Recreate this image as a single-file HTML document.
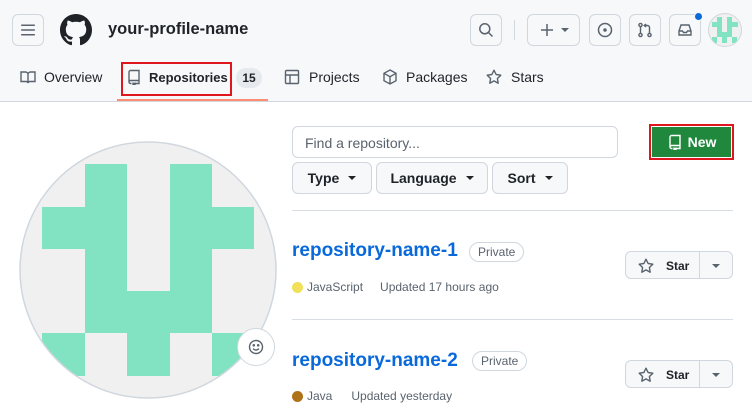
<!DOCTYPE html>
<html><head><meta charset="utf-8"><style>
*{box-sizing:border-box;margin:0;padding:0}
body{width:752px;height:420px;overflow:hidden;background:#fff;font-family:"Liberation Sans",sans-serif;color:#1f2328;position:relative}
.a{position:absolute}
.hdr{left:0;top:0;width:752px;height:102px;background:#f6f8fa;border-bottom:1px solid #d0d7de}
.ib{position:absolute;border:1px solid #d0d7de;border-radius:6px;background:#f6f8fa;display:flex;align-items:center;justify-content:center}
svg{display:block}
.tab{position:absolute;top:69px;font-size:14px;color:#1f2328;display:flex;align-items:center}
.btn{position:absolute;border:1px solid #d0d7de;border-radius:6px;background:#f6f8fa;font-size:14px;font-weight:bold;display:flex;align-items:center;justify-content:center;color:#1f2328}
.car{display:inline-block;width:0;height:0;border-left:4px solid transparent;border-right:4px solid transparent;border-top:4px solid #1f2328;margin-left:9px}
.title{position:absolute;left:292px;font-size:19px;font-weight:bold;color:#0969da}
.badge{position:absolute;border:1px solid #d0d7de;border-radius:10px;font-size:12px;color:#59636e;height:20px;line-height:18px;padding:0 8px}
.meta{position:absolute;left:292px;font-size:12px;color:#59636e;display:flex;align-items:center}
.dot{width:11px;height:11px;border-radius:50%;margin-right:4px}
.star{position:absolute;left:625px;width:108px;height:28px;border:1px solid #d0d7de;border-radius:6px;background:#f6f8fa;font-size:12px;font-weight:bold}
</style></head><body>
<div class="a hdr"></div>
<div class="ib" style="left:12px;top:14px;width:32px;height:32px"><svg width="16" height="16" viewBox="0 0 16 16" fill="#59636e"><rect x="1" y="2.5" width="14" height="1.5" rx=".7"/><rect x="1" y="7.25" width="14" height="1.5" rx=".7"/><rect x="1" y="12" width="14" height="1.5" rx=".7"/></svg></div>
<svg class="a" style="left:60px;top:14px" width="32" height="32" viewBox="0 0 16 16"><path fill="#1f2328" d="M8 0C3.58 0 0 3.58 0 8c0 3.54 2.29 6.530 5.47 7.59.4.07.55-.17.55-.38 0-.19-.01-.82-.01-1.49-2.01.37-2.53-.49-2.69-.94-.09-.23-.48-.94-.82-1.13-.28-.15-.68-.52-.01-.53.63-.01 1.08.58 1.23.82.72 1.21 1.87.87 2.33.66.07-.52.28-.87.51-1.07-1.78-.2-3.64-.89-3.64-3.95 0-.87.31-1.59.82-2.15-.08-.2-.36-1.02.08-2.12 0 0 .67-.21 2.2.82.64-.18 1.32-.27 2-.27.68 0 1.36.09 2 .27 1.53-1.04 2.2-.82 2.2-.82.44 1.1.16 1.92.08 2.12.51.56.82 1.27.82 2.15 0 3.07-1.87 3.75-3.65 3.95.29.25.54.73.54 1.48 0 1.07-.01 1.93-.01 2.2 0 .21.15.46.55.38A8.013 8.013 0 0016 8c0-4.42-3.58-8-8-8z"/></svg>
<div class="a" style="left:108px;top:20px;font-size:16.5px;font-weight:bold">your-profile-name</div>
<div class="ib" style="left:470px;top:14px;width:32px;height:32px"><svg width="16" height="16" viewBox="0 0 16 16" fill="none" stroke="#59636e" stroke-width="1.5"><circle cx="6.8" cy="6.8" r="5"/><path d="M10.5 10.5l4 4"/></svg></div>
<div class="a" style="left:514px;top:20px;width:1px;height:20px;background:#d0d7de"></div>
<div class="ib" style="left:527px;top:14px;width:53px;height:32px"><svg width="16" height="16" viewBox="0 0 16 16" stroke="#59636e" stroke-width="1.5"><path d="M8 2v12M2 8h12"/></svg><span class="car" style="border-top-color:#59636e;margin-left:6px"></span></div>
<div class="ib" style="left:589px;top:14px;width:32px;height:32px"><svg width="16" height="16" viewBox="0 0 16 16" fill="none" stroke="#59636e" stroke-width="1.5"><circle cx="8" cy="8" r="6.5"/><circle cx="8" cy="8" r="1" fill="#59636e"/></svg></div>
<div class="ib" style="left:629px;top:14px;width:32px;height:32px"><svg width="16" height="16" viewBox="0 0 16 16" fill="none" stroke="#59636e" stroke-width="1.4"><circle cx="3.5" cy="3" r="1.6"/><circle cx="3.5" cy="13" r="1.6"/><circle cx="12.5" cy="13" r="1.6"/><path d="M3.5 4.6v6.8M12.5 11.4V5.5a2 2 0 00-2-2H7.5M9 2l-1.8 1.5L9 5"/></svg></div>
<div class="ib" style="left:669px;top:14px;width:32px;height:32px"><svg width="16" height="16" viewBox="0 0 16 16" fill="none" stroke="#59636e" stroke-width="1.4"><path d="M2 9l2-6h8l2 6v4H2zM2 9h3.5l1 1.5h3l1-1.5H14"/></svg></div>
<div class="a" style="left:694px;top:12px;width:9px;height:9px;border-radius:50%;background:#0969da;border:1px solid #f6f8fa"></div>
<svg class="a" style="left:708px;top:13px" width="34" height="34" viewBox="0 0 34 34"><defs><clipPath id="c2"><circle cx="17" cy="17" r="16.5"/></clipPath></defs><g clip-path="url(#c2)"><rect width="34" height="34" fill="#f0f0f0"/><g fill="#82e3c2"><rect x="9" y="4" width="5" height="20"/><rect x="19" y="4" width="5" height="20"/><rect x="4" y="9" width="10" height="5"/><rect x="19" y="9" width="11" height="5"/><rect x="9" y="19" width="15" height="5"/><rect x="4" y="24" width="5" height="6"/><rect x="14" y="24" width="5" height="6"/><rect x="24" y="24" width="5" height="6"/></g></g><circle cx="17" cy="17" r="16.5" fill="none" stroke="#d0d7de"/></svg>

<div class="tab" style="left:20px"><svg width="16" height="16" viewBox="0 0 16 16" fill="none" stroke="#59636e" stroke-width="1.4"><path d="M1 3h4.5A2.5 2.5 0 018 5.5V14a2 2 0 00-2-1.5H1zM15 3h-4.5A2.5 2.5 0 008 5.5V14a2 2 0 012-1.5h5z"/></svg><span style="margin-left:8px">Overview</span></div>
<div class="a" style="left:121px;top:62px;width:111px;height:34px;border:2px solid #e0161f"></div>
<div class="tab" style="left:126px;font-weight:bold;font-size:13px"><svg width="16" height="16" viewBox="0 0 16 16" fill="none" stroke="#59636e" stroke-width="1.4"><path d="M3 13V3a1.5 1.5 0 011.5-1.5H13v10H4.5A1.5 1.5 0 003 13a1.5 1.5 0 001.5 1.5h1M7 13.5v2l1-.8 1 .8v-2M9 14.5h4v-3"/></svg><span style="margin-left:7px">Repositories</span></div>
<div class="a" style="left:236px;top:68px;width:26px;height:20px;border-radius:10px;background:#e6e9ed;font-size:12px;font-weight:bold;text-align:center;line-height:20px">15</div>
<div class="a" style="left:117px;top:99px;width:151px;height:2px;background:#fd8c73"></div>
<div class="tab" style="left:284px"><svg width="16" height="16" viewBox="0 0 16 16" fill="none" stroke="#59636e" stroke-width="1.4"><rect x="1.5" y="1.5" width="13" height="13" rx="1"/><path d="M1.5 6h13M6 6v8.5"/></svg><span style="margin-left:9px">Projects</span></div>
<div class="tab" style="left:382px"><svg width="16" height="16" viewBox="0 0 16 16" fill="none" stroke="#59636e" stroke-width="1.4"><path d="M8 1l6 3.3v7.4L8 15l-6-3.3V4.3zM2 4.3L8 7.7l6-3.4M8 7.7V15"/></svg><span style="margin-left:8px">Packages</span></div>
<div class="tab" style="left:486px"><svg width="16" height="16" viewBox="0 0 16 16" fill="none" stroke="#59636e" stroke-width="1.4" stroke-linejoin="round"><path d="M8 1.2l2.1 4.3 4.7.7-3.4 3.3.8 4.7L8 11.9l-4.2 2.3.8-4.7L1.2 6.2l4.7-.7z"/></svg><span style="margin-left:9px">Stars</span></div>

<svg class="a" style="left:19px;top:141px" width="258" height="258" viewBox="0 0 258 258"><defs><clipPath id="c1"><circle cx="129" cy="129" r="128"/></clipPath></defs><g clip-path="url(#c1)"><rect width="258" height="258" fill="#f0f0f0"/><g fill="#82e3c2"><rect x="66" y="23" width="42" height="169"/><rect x="151" y="23" width="42" height="169"/><rect x="23" y="66" width="85" height="42"/><rect x="151" y="66" width="84" height="42"/><rect x="66" y="150" width="127" height="42"/><rect x="23" y="192" width="43" height="43"/><rect x="108" y="192" width="43" height="43"/><rect x="193" y="192" width="42" height="43"/></g></g><circle cx="129" cy="129" r="128" fill="none" stroke="#d0d7de" stroke-width="1.5"/></svg>
<div class="a" style="left:237px;top:328px;width:38px;height:38px;border-radius:50%;background:#fff;border:1px solid #d0d7de;display:flex;align-items:center;justify-content:center"><svg width="16" height="16" viewBox="0 0 16 16" fill="none" stroke="#59636e" stroke-width="1.4"><circle cx="8" cy="8" r="6.5"/><path d="M5.2 9.5a3.3 3.3 0 005.6 0"/><circle cx="5.8" cy="6.3" r=".6" fill="#59636e"/><circle cx="10.2" cy="6.3" r=".6" fill="#59636e"/></svg></div>

<div class="a" style="left:292px;top:126px;width:326px;height:32px;border:1px solid #d0d7de;border-radius:6px;font-size:14px;color:#59636e;padding:8px 12px">Find a repository...</div>
<div class="a" style="left:649px;top:124px;width:85px;height:36px;border:2px solid #e0161f;padding:1px"><div style="width:100%;height:100%;background:#1f883d;color:#fff;font-size:14px;font-weight:bold;display:flex;align-items:center;justify-content:center"><svg width="16" height="16" viewBox="0 0 16 16" fill="none" stroke="#fff" stroke-width="1.4"><path d="M3 13V3a1.5 1.5 0 011.5-1.5H13v10H4.5A1.5 1.5 0 003 13a1.5 1.5 0 001.5 1.5h1M7 13.5v2l1-.8 1 .8v-2M9 14.5h4v-3"/></svg><span style="margin-left:5px">New</span></div></div>
<div class="btn" style="left:292px;top:162px;width:80px;height:32px">Type<span class="car"></span></div>
<div class="btn" style="left:376px;top:162px;width:112px;height:32px">Language<span class="car"></span></div>
<div class="btn" style="left:492px;top:162px;width:76px;height:32px">Sort<span class="car"></span></div>
<div class="a" style="left:292px;top:210px;width:441px;height:1px;background:#d8dee4"></div>

<div class="title" style="top:240px">repository-name-1</div>
<div class="badge" style="left:469px;top:242px">Private</div>
<div class="meta" style="top:280px"><span class="dot" style="background:#f1e05a"></span>JavaScript<span style="margin-left:17px">Updated 17 hours ago</span></div>
<div class="star" style="top:251px"><svg class="a" style="left:12px;top:6px" width="16" height="16" viewBox="0 0 16 16" fill="none" stroke="#59636e" stroke-width="1.4" stroke-linejoin="round"><path d="M8 1.2l2.1 4.3 4.7.7-3.4 3.3.8 4.7L8 11.9l-4.2 2.3.8-4.7L1.2 6.2l4.7-.7z"/></svg><span class="a" style="left:40px;top:7px">Star</span><div class="a" style="left:73px;top:0;width:1px;height:26px;background:#d0d7de"></div><span class="car a" style="left:77px;top:12px;border-top-color:#59636e"></span></div>
<div class="a" style="left:292px;top:319px;width:441px;height:1px;background:#d8dee4"></div>

<div class="title" style="top:350px">repository-name-2</div>
<div class="badge" style="left:472px;top:351px">Private</div>
<div class="meta" style="top:389px"><span class="dot" style="background:#b07219"></span>Java<span style="margin-left:19px">Updated yesterday</span></div>
<div class="star" style="top:360px"><svg class="a" style="left:12px;top:6px" width="16" height="16" viewBox="0 0 16 16" fill="none" stroke="#59636e" stroke-width="1.4" stroke-linejoin="round"><path d="M8 1.2l2.1 4.3 4.7.7-3.4 3.3.8 4.7L8 11.9l-4.2 2.3.8-4.7L1.2 6.2l4.7-.7z"/></svg><span class="a" style="left:40px;top:7px">Star</span><div class="a" style="left:73px;top:0;width:1px;height:26px;background:#d0d7de"></div><span class="car a" style="left:77px;top:12px;border-top-color:#59636e"></span></div>
</body></html>
